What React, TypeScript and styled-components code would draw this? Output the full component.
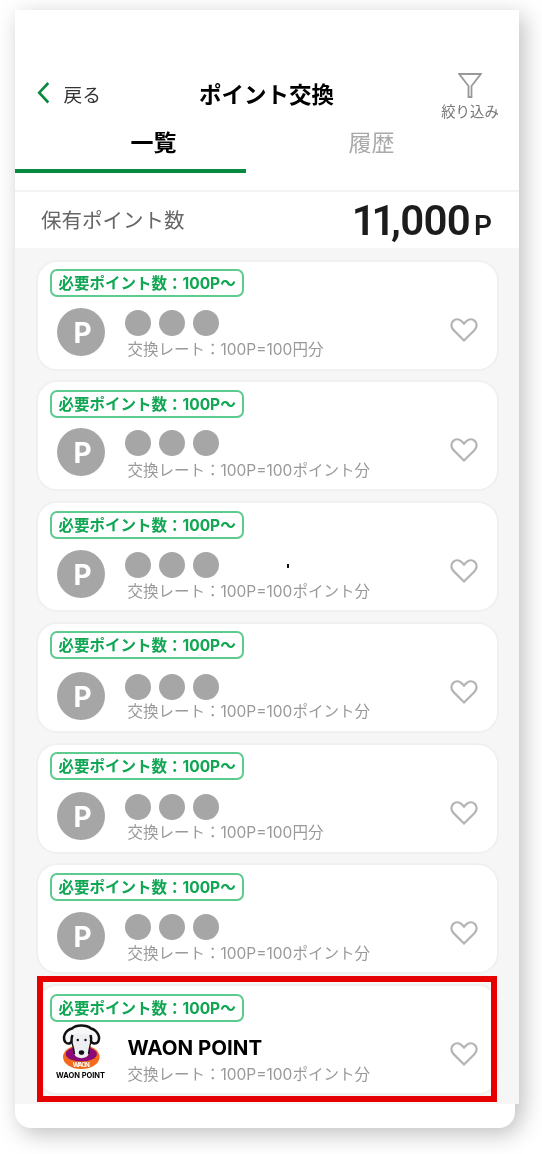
import React from "react";
import styled, { createGlobalStyle } from "styled-components";

const Global = createGlobalStyle`
  *, *::before, *::after { box-sizing: border-box; }
  body {
    margin: 0;
    background: #fff;
    font-family: Inter, "Noto Sans CJK JP", sans-serif;
    color: #000;
  }
`;

const Page = styled.main`
  width: 542px;
  height: 1154px;
  padding: 10px 0 0 15px;
  overflow: hidden;
`;

const Phone = styled.div`
  width: 504px;
  filter: drop-shadow(5px 6px 11px rgba(0, 0, 0, 0.25));
`;

const Screen = styled.section`
  width: 504px;
  height: 1094px;
  background: #fff;
`;

const Foot = styled.div`
  width: 500px;
  height: 24px;
  background: #fff;
  border-radius: 0 0 16px 16px;
`;

const Header = styled.header`
  height: 112px;
  padding: 62px 20px 0 22px;
  display: grid;
  grid-template-columns: 120px 1fr 58px;
`;

const Back = styled.div`
  display: flex;
  align-items: center;
  gap: 14.5px;
  height: 42px;
  font-size: 18.7px;
  color: #333;
  svg { display: block; }
`;

const Title = styled.h1`
  margin: 0;
  padding-left: 42px;
  font-size: 22.5px;
  line-height: 45px;
  font-weight: 700;
  white-space: nowrap;
`;

const Filter = styled.div`
  display: flex;
  flex-direction: column;
  align-items: center;
  gap: 3px;
  font-size: 14.4px;
  line-height: 21px;
  color: #777;
  white-space: nowrap;
  svg { display: block; }
`;

const Tabs = styled.nav`
  display: flex;
  height: 70px;
  border-bottom: 2px solid #f3f3f3;
`;

const Tab = styled.div<{ $active?: boolean }>`
  width: ${(p) => (p.$active ? 231 : 273)}px;
  height: 51px;
  padding-left: ${(p) => (p.$active ? 115.5 : 102.5)}px;
  padding-top: 4px;
  font-size: 23px;
  line-height: 34px;
  font-weight: ${(p) => (p.$active ? 700 : 400)};
  color: ${(p) => (p.$active ? "#000" : "#aaa")};
  border-bottom: 4px solid ${(p) => (p.$active ? "#07893e" : "transparent")};
`;

const Balance = styled.div`
  display: flex;
  justify-content: space-between;
  align-items: center;
  height: 56px;
  padding: 0 27px 0 26px;
`;

const BalanceLabel = styled.span`
  padding-bottom: 3px;
  font-size: 20.5px;
  color: #666;
`;

const Amount = styled.span`
  font-family: Roboto, sans-serif;
  font-weight: 600;
  font-size: 42px;
  line-height: 56px;
  letter-spacing: -0.7px;
  color: #1c1c1c;
  padding-top: 6px;
  small {
    margin-left: 4px;
    font-size: 28px;
    letter-spacing: 0;
  }
`;

const TightDigits = styled.span`
  letter-spacing: -4.4px;
`;

const List = styled.div`
  display: flex;
  flex-direction: column;
  gap: 9.8px;
  height: 856px;
  padding: 11.5px 20px 0 20.5px;
  background: #f6f6f6;
`;

const Card = styled.article`
  position: relative;
  height: 111px;
  flex: none;
  padding: 8.5px 19px 0 13px;
  border: 2px solid #f0f0f0;
  border-radius: 21px;
  background: #fff;
`;

const Badge = styled.div`
  width: 194.5px;
  height: 28px;
  padding-left: 7px;
  border: 2px solid #5ecb8e;
  border-radius: 7px;
  margin: -1px 0 0 -1px;
  font-size: 15.5px;
  line-height: 25px;
  font-weight: 700;
  color: #10a653;
  white-space: nowrap;
`;

const Body = styled.div`
  display: grid;
  grid-template-columns: 77px 1fr 28px;
`;

const Avatar = styled.div<{ $top: number }>`
  display: flex;
  align-items: center;
  justify-content: center;
  width: 48px;
  height: 48px;
  margin: ${(p) => p.$top}px 0 0 6.5px;
  padding: 2px 0 0 3px;
  border-radius: 50%;
  background: #a6a6a6;
  color: #fff;
  font-size: 28px;
  font-weight: 700;
`;

const Info = styled.div`
  display: flex;
  flex-direction: column;
  height: 70px;
`;

const Dots = styled.div<{ $top: number }>`
  display: flex;
  flex: none;
  gap: 8px;
  height: 41px;
  padding-top: ${(p) => p.$top}px;
  margin-left: -2.5px;
`;

const Dot = styled.i`
  flex: none;
  width: 26px;
  height: 26px;
  border-radius: 50%;
  background: #a6a6a6;
`;

const Name = styled.strong`
  flex: none;
  height: 41px;
  padding-top: 13px;
  font-size: 20.5px;
  line-height: 25px;
  font-weight: 650;
`;

const Rate = styled.span`
  font-size: 15.5px;
  line-height: 24px;
  color: #999;
  white-space: nowrap;
`;

const Like = styled.div`
  padding-top: 19.5px;
  svg { display: block; }
`;

const Logo = styled.div`
  margin-left: 4px;
  padding-top: 2px;
  svg { display: block; }
`;

const Highlight = styled.div`
  position: absolute;
  left: -0.5px;
  top: -10.5px;
  width: 460px;
  height: 126px;
  border: 6px solid #e60000;
`;

const Speck = styled.i`
  position: absolute;
  left: 249.5px;
  top: 60.5px;
  width: 1.5px;
  height: 4px;
  background: #111;
`;

function Heart() {
  return (
    <svg width="28" height="26" viewBox="0 0 28 26" fill="none" stroke="#b4b4b4" strokeWidth="2.2">
      <path d="M14 23.5 L3.4 12.9 C0.6 10 0.9 6 3.3 3.9 C6 1.5 9.6 2.2 11.7 4.3 L14 6.6 L16.3 4.3 C18.4 2.2 22 1.5 24.7 3.9 C27.1 6 27.4 10 24.6 12.9 Z" />
    </svg>
  );
}

function DogLogo() {
  return (
    <svg width="52" height="57" viewBox="0 0 52 57">
      <ellipse cx="26.3" cy="33" rx="18.3" ry="12" fill="#f26a1b" />
      <ellipse cx="26.3" cy="30" rx="15.6" ry="7.6" fill="#8b0a78" />
      <path d="M17 6 H36 V17 C35 22 34 25 33.5 30 C32.5 35.5 20.5 35.5 19.5 30 C19 25 18 22 16.5 17Z" fill="#eeeff3" />
      <path d="M16.5 17 C18 22 19 25 19.5 30 M36 17 C35 22 34 25 33.5 30" fill="none" stroke="#111" strokeWidth="1.3" />
      <path d="M17 4.5 C21 0.5 31.5 0.5 36 4.5 C42 6 46 13 43 18 C41 20.5 37 20 36 17 C36.5 14 36 12 35.5 10 H17.5 C16.5 12 16.5 14 16.5 17 C16 20 12.5 20.5 10.3 18 C7 13 10.5 6 17 4.5Z" fill="#f7f7f9" />
      <path d="M17.5 11 C16.5 13 16.5 14 16.5 17 C16 20 12.5 20.5 10.3 18 C7 13 10.5 6 17 4.5 C21 0.5 31.5 0.5 36 4.5 C42 6 46 13 43 18 C41 20.5 37 20 36 17 C36.5 14 36 13 35.5 11" fill="none" stroke="#111" strokeWidth="2.5" strokeLinejoin="round" />
      <circle cx="22.8" cy="16" r="1.2" fill="#111" />
      <circle cx="30.5" cy="16" r="1.2" fill="#111" />
      <ellipse cx="26.5" cy="28.5" rx="2.7" ry="2.3" fill="#111" />
      <text x="26.3" y="43.3" textAnchor="middle" fontSize="6.3" fontWeight="700" fill="#fff" textLength="17">WAON</text>
      <text x="25.5" y="54" textAnchor="middle" fontSize="7.8" fontWeight="700" fill="#000" textLength="49" lengthAdjust="spacingAndGlyphs">WAON POINT</text>
    </svg>
  );
}

const items = [
  { unit: "円分", top: 10.5 },
  { unit: "ポイント分", top: 10.4 },
  { unit: "ポイント分", top: 11.6, speck: true },
  { unit: "ポイント分", top: 12.8 },
  { unit: "円分", top: 12 },
  { unit: "ポイント分", top: 11.2 },
  { unit: "ポイント分", top: 10.5, waon: true },
];

export default function App() {
  return (
    <>
      <Global />
      <Page>
        <Phone>
          <Screen>
            <Header>
              <Back>
                <svg width="12" height="22" viewBox="0 0 12 22" fill="none" stroke="#07893e" strokeWidth="2.6">
                  <path d="M11.3 1 L2.2 10.7 L11.3 20.5" />
                </svg>
                戻る
              </Back>
              <Title>ポイント交換</Title>
              <Filter>
                <svg width="24" height="26" viewBox="0 0 24 26" fill="none" stroke="#999" strokeWidth="1.8">
                  <path d="M1.2 2 H22.8 L13.5 14 V25 H10.5 V14 Z" />
                </svg>
                絞り込み
              </Filter>
            </Header>
            <Tabs>
              <Tab $active>一覧</Tab>
              <Tab>履歴</Tab>
            </Tabs>
            <Balance>
              <BalanceLabel>保有ポイント数</BalanceLabel>
              <Amount>
                <TightDigits>11</TightDigits>,000<small>P</small>
              </Amount>
            </Balance>
            <List>
              {items.map((item, i) => (
                <Card key={i}>
                  <Badge>必要ポイント数：100P〜</Badge>
                  <Body>
                    {item.waon ? <Logo><DogLogo /></Logo> : <Avatar $top={item.top}>P</Avatar>}
                    <Info>
                      {item.waon ? (
                        <Name>WAON POINT</Name>
                      ) : (
                        <Dots $top={item.top + 2}>
                          <Dot />
                          <Dot />
                          <Dot />
                        </Dots>
                      )}
                      <Rate>交換レート：100P=100{item.unit}</Rate>
                    </Info>
                    <Like><Heart /></Like>
                  </Body>
                  {item.speck && <Speck />}
                  {item.waon && <Highlight />}
                </Card>
              ))}
            </List>
          </Screen>
          <Foot />
        </Phone>
      </Page>
    </>
  );
}
